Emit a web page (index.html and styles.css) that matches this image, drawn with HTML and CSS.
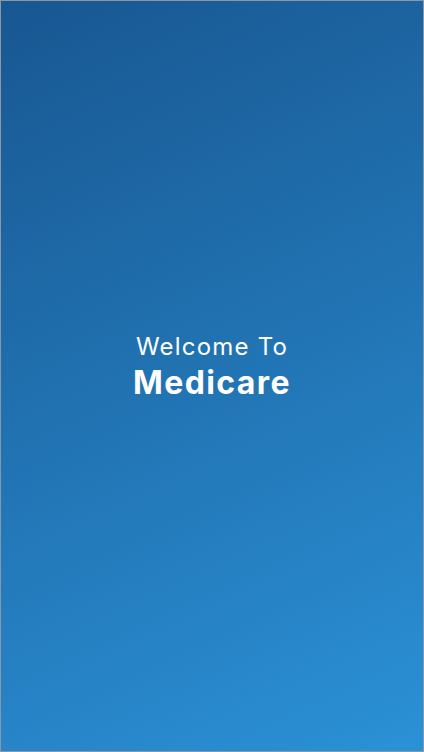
FILE: index.html
```html
<!DOCTYPE html>
<html lang="en">
<head>
    <meta charset="UTF-8">
    <meta name="viewport" content="width=device-width, initial-scale=1.0">
    <title>Medicare</title>
    <link rel="stylesheet" href="styles.css">
</head>
<body>
    <div class="splash">
        <p class="welcome">Welcome To</p>
        <h1 class="brand">Medicare</h1>
    </div>
</body>
</html>
```

FILE: styles.css
```css
body {
    margin: 0;
    font-family: "Inter", "Noto Sans", sans-serif;
}
.splash {
    box-sizing: border-box;
    height: 752px;
    border: 1px solid #8a98a6;
    background: linear-gradient(155deg, #185791 0%, #2b91d6 100%);
    display: flex;
    flex-direction: column;
    align-items: center;
    justify-content: center;
    color: #fff;
    padding-bottom: 20px;
}
.welcome {
    margin: 0;
    font-size: 24px;
    font-weight: 400;
    line-height: 34px;
    letter-spacing: 1.2px;
}
.brand {
    margin: 0;
    font-size: 32px;
    font-weight: 700;
    line-height: 38px;
    letter-spacing: 1.4px;
}
```
